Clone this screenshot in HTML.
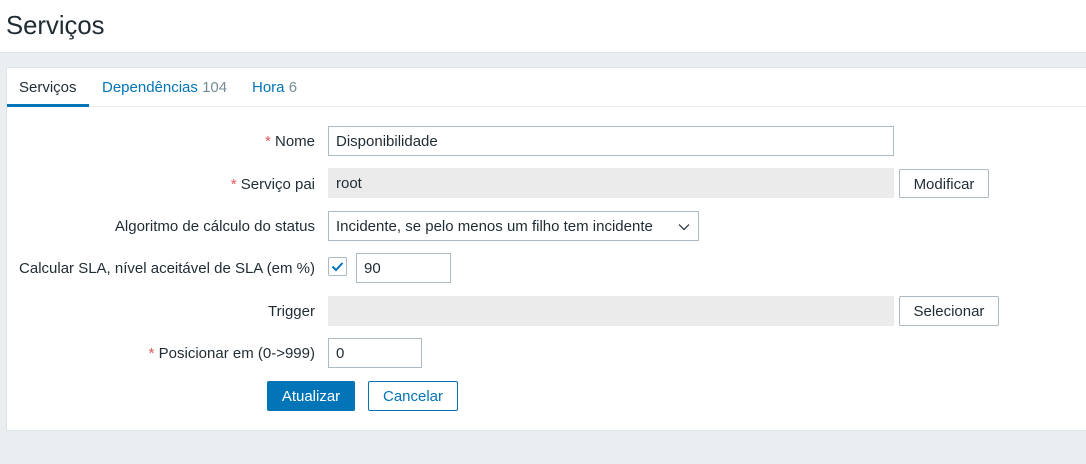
<!DOCTYPE html>
<html><head><meta charset="utf-8"><style>
*{box-sizing:border-box;margin:0;padding:0}
body{width:1086px;height:464px;background:#ebeef0;font-family:"Liberation Sans",Arial,sans-serif;font-size:15px;color:#1f2c33;position:relative;overflow:hidden}
.hdr{position:absolute;left:0;top:0;width:1086px;height:53px;background:#fff;border-bottom:1px solid #dfe4e7}
.hdr h1{position:absolute;left:6px;top:12px;font-size:25.7px;font-weight:normal;color:#1f2c33}
.panel{position:absolute;left:7px;top:67px;width:1086px;height:364px;background:#fff;border:1px solid #dfe4e7}
.a{position:absolute;}
.lbl{position:absolute;right:771px;text-align:right;white-space:nowrap}
.req{color:#e45959}
.in{position:absolute;border:1px solid #acbbc2;background:#fff;padding-left:7px;line-height:29px}
.ro{background:#ebebeb;border-color:#ebebeb}
.btn{position:absolute;border:1px solid #acbbc2;border-radius:2px;background:#fff;text-align:center;line-height:29px}
</style></head><body>
<div class="hdr"><h1>Serviços</h1></div>
<div class="panel" style="left:6px"></div>
<div class="a" style="left:19px;top:79px">Serviços</div>
<div class="a" style="left:7px;top:104px;width:82px;height:3px;background:#0275b8"></div>
<div class="a" style="left:89px;top:106px;width:997px;height:1px;background:#ebeef0"></div>
<div class="a" style="left:102px;top:79px;color:#0275b8">Dependências <span style="color:#768d99">104</span></div>
<div class="a" style="left:252px;top:79px;color:#0275b8">Hora <span style="color:#768d99">6</span></div>

<div class="lbl" style="top:133px"><span class="req">*</span> Nome</div>
<div class="in" style="left:328px;top:126px;width:566px;height:30px">Disponibilidade</div>

<div class="lbl" style="top:176px"><span class="req">*</span> Serviço pai</div>
<div class="in ro" style="left:328px;top:168px;width:566px;height:30px">root</div>
<div class="btn" style="left:899px;top:169px;width:90px;height:29px">Modificar</div>

<div class="lbl" style="top:218px">Algoritmo de cálculo do status</div>
<div class="in" style="left:328px;top:211px;width:371px;height:30px">Incidente, se pelo menos um filho tem incidente
<svg style="position:absolute;right:8px;top:11px" width="12" height="8"><path d="M1 1.5L6 6.5L11 1.5" fill="none" stroke="#1f2c33" stroke-width="1.2"/></svg></div>

<div class="lbl" style="top:260px">Calcular SLA, nível aceitável de SLA (em %)</div>
<div class="a" style="left:328px;top:257px;width:19px;height:19px;border:1px solid #acbbc2;border-radius:2px">
<svg width="17" height="17" style="position:absolute;left:0;top:0"><path d="M3.5 8.5L7 12L13.5 5" fill="none" stroke="#0275b8" stroke-width="2"/></svg></div>
<div class="in" style="left:356px;top:253px;width:95px;height:30px">90</div>

<div class="lbl" style="top:303px">Trigger</div>
<div class="in ro" style="left:328px;top:296px;width:566px;height:30px"></div>
<div class="btn" style="left:899px;top:296px;width:100px;height:30px">Selecionar</div>

<div class="lbl" style="top:345px"><span class="req">*</span> Posicionar em (0-&gt;999)</div>
<div class="in" style="left:328px;top:338px;width:94px;height:30px">0</div>

<div class="btn" style="left:267px;top:381px;width:88px;height:30px;background:#0275b8;border-color:#0275b8;color:#fff">Atualizar</div>
<div class="btn" style="left:368px;top:381px;width:90px;height:30px;border-color:#0275b8;color:#0275b8">Cancelar</div>
</body></html>
